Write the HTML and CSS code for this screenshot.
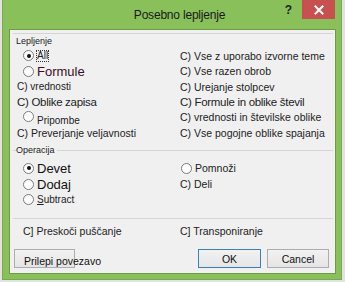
FILE: index.html
```html
<!DOCTYPE html>
<html>
<head>
<meta charset="utf-8">
<link rel="stylesheet" href="styles.css">
</head>
<body>
<div class="screen">
  <div class="dialog">
    <div class="titlebar">
      <div class="title">Posebno lepljenje</div>
      <div class="help">?</div>
      <div class="close">
        <svg width="10" height="10" viewBox="0 0 10 10"><path d="M1.5 1.5 L8.5 8.5 M8.5 1.5 L1.5 8.5" stroke="#fff" stroke-width="2" stroke-linecap="square"/></svg>
      </div>
    </div>
    <div class="panel">
      <div class="group">
        <div class="legend">Lepljenje</div>
        <div class="grid paste">
          <div class="cell"><span class="radio checked"></span><span class="t small focus">All</span></div>
          <div class="cell r">C) Vse z uporabo izvorne teme</div>
          <div class="cell"><span class="radio"></span><span class="t big maroon">Formule</span></div>
          <div class="cell r">C) Vse razen obrob</div>
          <div class="cell l small">C) vrednosti</div>
          <div class="cell r">C) Urejanje stolpcev</div>
          <div class="cell l mid">C) Oblike zapisa</div>
          <div class="cell r mid">C) Formule in oblike števil</div>
          <div class="cell low"><span class="radio"></span><span class="t small down">Pripombe</span></div>
          <div class="cell r">C) vrednosti in številske oblike</div>
          <div class="cell l">C) Preverjanje veljavnosti</div>
          <div class="cell r">C) Vse pogojne oblike spajanja</div>
        </div>
      </div>
      <div class="group op">
        <div class="legend">Operacija</div>
        <div class="grid ops">
          <div class="cell"><span class="radio checked"></span><span class="t big">Devet</span></div>
          <div class="cell r2"><span class="radio"></span><span class="t">Pomnoži</span></div>
          <div class="cell"><span class="radio"></span><span class="t big">Dodaj</span></div>
          <div class="cell r">C) Deli</div>
          <div class="cell"><span class="radio"></span><span class="t small"><u>S</u>ubtract</span></div>
          <div class="cell"></div>
        </div>
      </div>
      <div class="grid extra">
        <div class="cell x">C] Preskoči puščanje</div>
        <div class="cell r">C] Transponiranje</div>
      </div>
      <div class="buttons">
        <div class="btn link"><span>Prilepi povezavo</span></div>
        <div class="spacer"></div>
        <div class="btn ok">OK</div>
        <div class="btn cancel">Cancel</div>
      </div>
    </div>
  </div>
</div>
</body>
</html>
```
FILE: styles.css
```css
html, body {
  margin: 0;
  padding: 0;
}
body {
  width: 345px;
  height: 282px;
  background: #e2e2e2;
  font-family: "Liberation Sans", Arial, sans-serif;
  color: #1a1a1a;
  overflow: hidden;
}
.screen {
  display: flex;
  padding: 0 3px 0 2px;
  height: 282px;
  box-sizing: border-box;
}
.dialog {
  flex: 1;
  height: 280px;
  background: #89c05a;
  border: 1px solid #7aa94e;
  border-top: none;
  box-sizing: border-box;
  display: flex;
  flex-direction: column;
  padding: 0 5px 5px 6px;
}
.titlebar {
  height: 29px;
  display: flex;
  align-items: flex-start;
  position: relative;
  flex: none;
}
.title {
  position: absolute;
  left: 0;
  right: 0;
  top: 8px;
  text-align: center;
  padding-left: 14px;
  font-size: 12px;
  color: #1a1a1a;
  letter-spacing: -0.2px;
}
.help {
  margin-left: auto;
  margin-top: 3px;
  margin-right: 10px;
  font-size: 12px;
  font-weight: bold;
  color: #222;
}
.close {
  width: 33px;
  height: 19px;
  background: #c75050;
  display: flex;
  align-items: center;
  justify-content: center;
  margin-right: 1px;
}
.panel {
  flex: 1;
  background: #f0f0f0;
  border: 1px solid #6f9a48;
  display: flex;
  flex-direction: column;
  padding: 3px 2px 0 2px;
}
.group {
  border-top: 1px solid #d5d5d5;
  position: relative;
  padding-top: 10px;
  margin-left: 1px;
}
.legend {
  position: absolute;
  top: 2px;
  left: 3px;
  font-size: 9px;
  background: #f0f0f0;
  padding-right: 2px;
  color: #222;
}
.op {
  margin-top: 9px;
  border-top: 1px solid #d5d5d5;
  padding-top: 9px;
}
.op .legend {
  top: -6px;
}
.grid {
  display: grid;
  grid-template-columns: 167px 1fr;
}
.paste {
  grid-template-rows: 15px 16px 15px 15px 16px 16px;
  padding-top: 4px;
}
.ops {
  grid-template-rows: 16px 16px 15px;
}
.cell {
  display: flex;
  align-items: center;
  font-size: 10.5px;
  white-space: nowrap;
  color: #222;
}
.cell.l {
  padding-left: 4px;
}
.cell.x {
  padding-left: 10px;
}
.radio {
  width: 11px;
  height: 11px;
  border: 1px solid #7a7a7a;
  border-radius: 50%;
  background: #fff;
  box-sizing: border-box;
  margin-left: 10px;
  margin-right: 3px;
  position: relative;
  flex: none;
}
.cell.r2 .radio {
  margin-left: 1px;
}
.radio.checked::after {
  content: "";
  position: absolute;
  left: 2.5px;
  top: 2.5px;
  width: 4px;
  height: 4px;
  border-radius: 50%;
  background: #111;
}
.t.big {
  font-size: 13px;
  color: #111;
}
.small {
  font-size: 10px;
}
.mid {
  font-size: 11.5px;
  letter-spacing: -0.3px;
}
.maroon {
  color: #3a0d1e !important;
}
.focus {
  outline: 1px dotted #333;
  outline-offset: 0;
  line-height: 10px;
}
.low {
  align-items: flex-start;
  padding-top: 2px;
}
.down {
  margin-top: 4px;
}
.extra {
  border-top: 1px solid #d5d5d5;
  margin-top: 11px;
  padding-top: 6px;
  margin-left: 1px;
}
.buttons {
  display: flex;
  margin-top: 12px;
  padding-left: 2px;
  padding-right: 4px;
}
.spacer {
  flex: 1;
}
.btn {
  height: 19px;
  box-sizing: border-box;
  border: 1px solid #adadad;
  background: linear-gradient(#f2f2f2, #e5e5e5);
  font-size: 10.5px;
  display: flex;
  align-items: center;
  justify-content: center;
  color: #111;
}
.link {
  width: 61px;
  justify-content: flex-start;
  padding-left: 9px;
  white-space: nowrap;
}
.link span {
  margin-top: 5px;
}
.ok {
  width: 63px;
  border-color: #3c7fb1;
  margin-right: 6px;
}
.cancel {
  width: 62px;
}
```
